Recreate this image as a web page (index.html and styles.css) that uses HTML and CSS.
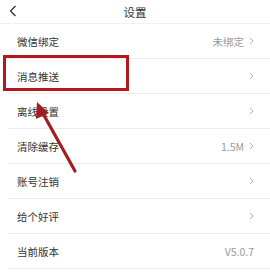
FILE: index.html
```html
<!DOCTYPE html>
<html lang="zh">
<head>
    <meta charset="UTF-8">
    <meta name="viewport" content="width=device-width, initial-scale=1.0">
    <title>设置</title>
    <link rel="stylesheet" href="styles.css">
</head>
<body>
    <div class="page">
        <header class="topbar">
            <span class="back">
                <svg width="8" height="12" viewBox="0 0 8 12"><polyline points="6.5,1 1.5,6 6.5,11" fill="none" stroke="#333" stroke-width="1.3"/></svg>
            </span>
            <div class="title">设置</div>
        </header>

        <ul class="settings">
            <li class="row"><span class="label">微信绑定</span><span class="value">未绑定</span><span class="arrow"><svg width="5" height="8" viewBox="0 0 5 8"><polyline points="1,1 4,4 1,7" fill="none" stroke="#aaa" stroke-width="0.9"/></svg></span></li>
            <li class="row"><span class="label">消息推送</span><span class="arrow"><svg width="5" height="8" viewBox="0 0 5 8"><polyline points="1,1 4,4 1,7" fill="none" stroke="#aaa" stroke-width="0.9"/></svg></span></li>
            <li class="row"><span class="label">离线设置</span><span class="arrow"><svg width="5" height="8" viewBox="0 0 5 8"><polyline points="1,1 4,4 1,7" fill="none" stroke="#aaa" stroke-width="0.9"/></svg></span></li>
            <li class="row"><span class="label">清除缓存</span><span class="value">1.5M</span><span class="arrow"><svg width="5" height="8" viewBox="0 0 5 8"><polyline points="1,1 4,4 1,7" fill="none" stroke="#aaa" stroke-width="0.9"/></svg></span></li>
            <li class="row"><span class="label">账号注销</span><span class="arrow"><svg width="5" height="8" viewBox="0 0 5 8"><polyline points="1,1 4,4 1,7" fill="none" stroke="#aaa" stroke-width="0.9"/></svg></span></li>
            <li class="row"><span class="label">给个好评</span><span class="arrow"><svg width="5" height="8" viewBox="0 0 5 8"><polyline points="1,1 4,4 1,7" fill="none" stroke="#aaa" stroke-width="0.9"/></svg></span></li>
            <li class="row"><span class="label">当前版本</span><span class="value">V5.0.7</span></li>
        </ul>

        <!-- annotation: red box + arrow -->
        <div class="highlight"></div>
        <svg class="pointer" width="270" height="276" viewBox="0 0 270 276">
            <line x1="75" y1="171" x2="41" y2="110" stroke="#a31f1f" stroke-width="3.2" stroke-linecap="round"/>
            <polygon points="37,102 49,113 36,119" fill="#a31f1f"/>
        </svg>
    </div>
</body>
</html>
```

FILE: styles.css
```css
body {
    margin: 0;
    background: #fff;
    font-family: "Noto Sans CJK SC", "Noto Sans", sans-serif;
    color: #333;
}

.page {
    position: relative;
    width: 270px;
    height: 276px;
    overflow: hidden;
}

.topbar {
    display: flex;
    align-items: center;
    justify-content: center;
    position: relative;
    height: 23px;
    border-bottom: 1px solid #f0f0f0;
}

.back {
    position: absolute;
    left: 9px;
    top: 5px;
    display: flex;
}

.title {
    font-size: 11.5px;
    color: #333;
}

.settings {
    list-style: none;
    margin: 0;
    padding: 0 0 0 9px;
}

.row {
    display: flex;
    align-items: center;
    height: 34px;
    padding: 0 16px 0 8px;
    border-bottom: 1px solid #ebebeb;
    font-size: 10.5px;
}

.label {
    flex: 1;
    color: #333;
}

.value {
    color: #999;
}

.arrow {
    display: flex;
    margin-left: 5px;
}

.highlight {
    position: absolute;
    left: 3px;
    top: 55px;
    width: 120px;
    height: 30px;
    border: 3px solid #b3191c;
}

.pointer {
    position: absolute;
    left: 0;
    top: 0;
}
```
